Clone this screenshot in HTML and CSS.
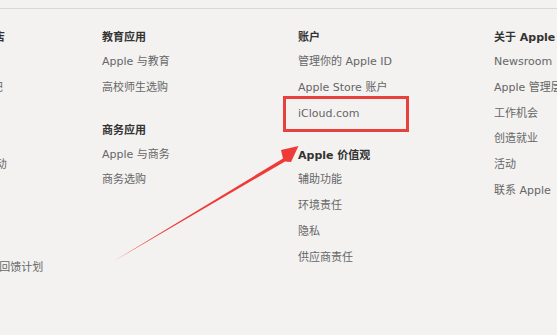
FILE: index.html
```html
<!DOCTYPE html>
<html lang="zh-CN">
<head>
<meta charset="utf-8">
<title>Apple 页脚</title>
<link rel="stylesheet" href="styles.css">
</head>
<body>
<div class="page">
  <div class="rule"></div>
  <nav class="footer">
    <div class="col">
      <section class="group">
        <h3 class="head">Apple Store 商店</h3>
        <a class="link">查找零售店</a>
        <a class="link">Genius Bar 天才吧</a>
        <a class="link">Today at Apple</a>
        <a class="link">Apple 夏令营</a>
        <a class="link">Apple 创意课程活动</a>
        <a class="link">Apple Store App</a>
        <a class="link">翻新和清仓产品</a>
        <a class="link">融资分期</a>
        <a class="link">Apple Trade In 及回馈计划</a>
      </section>
    </div>
    <div class="col">
      <section class="group">
        <h3 class="head">教育应用</h3>
        <a class="link">Apple 与教育</a>
        <a class="link">高校师生选购</a>
      </section>
      <section class="group">
        <h3 class="head">商务应用</h3>
        <a class="link">Apple 与商务</a>
        <a class="link">商务选购</a>
      </section>
    </div>
    <div class="col">
      <section class="group">
        <h3 class="head">账户</h3>
        <a class="link">管理你的 Apple ID</a>
        <a class="link">Apple Store 账户</a>
        <a class="link">iCloud.com</a>
      </section>
      <section class="group">
        <h3 class="head">Apple 价值观</h3>
        <a class="link">辅助功能</a>
        <a class="link">环境责任</a>
        <a class="link">隐私</a>
        <a class="link">供应商责任</a>
      </section>
    </div>
    <div class="col">
      <section class="group">
        <h3 class="head">关于 Apple</h3>
        <a class="link">Newsroom</a>
        <a class="link">Apple 管理层</a>
        <a class="link">工作机会</a>
        <a class="link">创造就业</a>
        <a class="link">活动</a>
        <a class="link">联系 Apple</a>
      </section>
    </div>
  </nav>
  <div class="mark-box"></div>
  <svg class="mark-arrow" width="557" height="335" viewBox="0 0 557 335" xmlns="http://www.w3.org/2000/svg">
    <polygon points="114,261 283,158.5 281,150 298.5,146 291,162 285,161.5" fill="#ee3b37"/>
  </svg>
</div>
</body>
</html>
```

FILE: styles.css
```css
html, body {
  margin: 0;
  padding: 0;
}
body {
  background: #f3f2f1;
  font-family: "DejaVu Sans", "Noto Sans CJK SC", sans-serif;
  font-size: 11px;
  overflow: hidden;
}
.page {
  position: relative;
  width: 557px;
  height: 335px;
  overflow: hidden;
  padding-top: 8px;
  box-sizing: border-box;
}
.rule {
  height: 1px;
  background: #d8d7d6;
}
.footer {
  display: flex;
  margin-left: -94px;
  padding-top: 17px;
}
.col {
  width: 196px;
  flex: none;
  display: flex;
  flex-direction: column;
  gap: 18px;
}
.group {
  display: flex;
  flex-direction: column;
}
.head {
  margin: 0;
  font-size: 11px;
  font-weight: 700;
  color: #333;
  line-height: 23px;
  white-space: nowrap;
}
.link {
  color: #666;
  line-height: 25.8px;
  white-space: nowrap;
}
.mark-box {
  position: absolute;
  left: 283px;
  top: 96px;
  width: 120px;
  height: 30px;
  border: 3px solid #e8403d;
}
.mark-arrow {
  position: absolute;
  left: 0;
  top: 0;
}
```
